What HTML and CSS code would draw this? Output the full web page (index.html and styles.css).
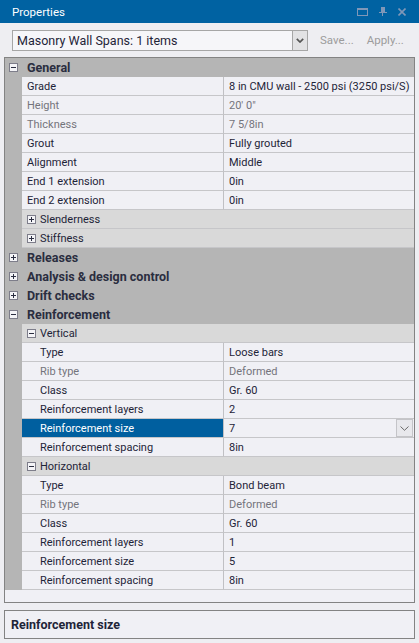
FILE: index.html
```html
<!DOCTYPE html>
<html>
<head>
<meta charset="utf-8">
<link rel="stylesheet" href="styles.css">
</head>
<body>
<div class="window">
  <div class="titlebar">
    <span class="title">Properties</span>
    <div class="title-icons">
      <svg width="11" height="8" viewBox="0 0 11 8"><rect x="0.5" y="0.5" width="10" height="7" fill="none" stroke="#7f97b8" stroke-width="1"/><rect x="0" y="0" width="11" height="2" fill="#7f97b8"/></svg>
      <svg width="8" height="9" viewBox="0 0 8 9"><rect x="2" y="0" width="4" height="5" fill="#7f97b8"/><rect x="0" y="5" width="8" height="1" fill="#7f97b8"/><rect x="3" y="6" width="1" height="3" fill="#7f97b8"/></svg>
      <svg width="8" height="8" viewBox="0 0 8 8"><path d="M0.5 0.5 L7.5 7.5 M7.5 0.5 L0.5 7.5" stroke="#7f97b8" stroke-width="1.6"/></svg>
    </div>
  </div>
  <div class="toolbar">
    <div class="combo">
      <span class="combo-text">Masonry Wall Spans: 1 items</span>
      <span class="combo-btn"><svg width="8" height="5" viewBox="0 0 8 5"><path d="M0.8 0.8 L4 4 L7.2 0.8" fill="none" stroke="#555" stroke-width="1.7"/></svg></span>
    </div>
    <span class="tool-link">Save...</span>
    <span class="tool-link">Apply...</span>
  </div>
  <div class="grid">
    <div class="cat"><span class="exp"><i class="minus"></i></span><span class="cat-name">General</span></div>
    <div class="prop"><span class="gut"></span><span class="name">Grade</span><span class="val">8 in CMU wall - 2500 psi (3250 psi/S)</span></div>
    <div class="prop dis"><span class="gut"></span><span class="name">Height</span><span class="val">20′ 0″</span></div>
    <div class="prop dis"><span class="gut"></span><span class="name">Thickness</span><span class="val">7 5/8in</span></div>
    <div class="prop"><span class="gut"></span><span class="name">Grout</span><span class="val">Fully grouted</span></div>
    <div class="prop"><span class="gut"></span><span class="name">Alignment</span><span class="val">Middle</span></div>
    <div class="prop"><span class="gut"></span><span class="name">End 1 extension</span><span class="val">0in</span></div>
    <div class="prop"><span class="gut"></span><span class="name">End 2 extension</span><span class="val">0in</span></div>
    <div class="sub"><span class="gut"></span><span class="sub-body"><span class="exp2"><i class="plus"></i></span>Slenderness</span></div>
    <div class="sub"><span class="gut"></span><span class="sub-body"><span class="exp2"><i class="plus"></i></span>Stiffness</span></div>
    <div class="cat"><span class="exp"><i class="plus"></i></span><span class="cat-name">Releases</span></div>
    <div class="cat"><span class="exp"><i class="plus"></i></span><span class="cat-name">Analysis &amp; design control</span></div>
    <div class="cat"><span class="exp"><i class="plus"></i></span><span class="cat-name">Drift checks</span></div>
    <div class="cat"><span class="exp"><i class="minus"></i></span><span class="cat-name">Reinforcement</span></div>
    <div class="sub"><span class="gut"></span><span class="sub-body"><span class="exp2"><i class="minus"></i></span>Vertical</span></div>
    <div class="prop nest"><span class="gut"></span><span class="name">Type</span><span class="val">Loose bars</span></div>
    <div class="prop nest dis"><span class="gut"></span><span class="name">Rib type</span><span class="val">Deformed</span></div>
    <div class="prop nest"><span class="gut"></span><span class="name">Class</span><span class="val">Gr. 60</span></div>
    <div class="prop nest"><span class="gut"></span><span class="name">Reinforcement layers</span><span class="val">2</span></div>
    <div class="prop nest sel"><span class="gut"></span><span class="name">Reinforcement size</span><span class="val"><span class="val-text">7</span><span class="cell-btn"><svg width="9" height="5" viewBox="0 0 9 5"><path d="M0.5 0.5 L4.5 4.3 L8.5 0.5" fill="none" stroke="#6a6a6a" stroke-width="1"/></svg></span></span></div>
    <div class="prop nest"><span class="gut"></span><span class="name">Reinforcement spacing</span><span class="val">8in</span></div>
    <div class="sub"><span class="gut"></span><span class="sub-body"><span class="exp2"><i class="minus"></i></span>Horizontal</span></div>
    <div class="prop nest"><span class="gut"></span><span class="name">Type</span><span class="val">Bond beam</span></div>
    <div class="prop nest dis"><span class="gut"></span><span class="name">Rib type</span><span class="val">Deformed</span></div>
    <div class="prop nest"><span class="gut"></span><span class="name">Class</span><span class="val">Gr. 60</span></div>
    <div class="prop nest"><span class="gut"></span><span class="name">Reinforcement layers</span><span class="val">1</span></div>
    <div class="prop nest"><span class="gut"></span><span class="name">Reinforcement size</span><span class="val">5</span></div>
    <div class="prop nest"><span class="gut"></span><span class="name">Reinforcement spacing</span><span class="val">8in</span></div>
  </div>
  <div class="desc"><span class="desc-title">Reinforcement size</span></div>
</div>
</body>
</html>
```
FILE: styles.css
```css
* { box-sizing: border-box; }
html, body { margin: 0; padding: 0; }
body {
  font-family: Roboto, "Noto Sans", sans-serif;
  font-size: 11px;
  color: #1e2438;
  background: #eeeef2;
}
.window {
  width: 419px;
  height: 643px;
  display: flex;
  flex-direction: column;
  background: #eeeef2;
  overflow: hidden;
}
.titlebar {
  height: 23px;
  flex: none;
  background: #0062a2;
  display: flex;
  align-items: center;
  justify-content: space-between;
  padding: 0 13px 0 12px;
}
.title { color: #ffffff; font-size: 11.5px; }
.title-icons { display: flex; align-items: center; gap: 11px; }
.title-icons svg { display: block; }
.toolbar {
  height: 34px;
  flex: none;
  display: flex;
  align-items: flex-start;
  padding: 7px 0 0 12px;
}
.combo {
  width: 296px;
  height: 21px;
  border: 1px solid #a6a6a6;
  background: #f6f6f9;
  display: flex;
  align-items: stretch;
}
.combo-text { flex: 1; padding-left: 4px; line-height: 19px; font-size: 12.5px; }
.combo-btn {
  width: 15px;
  border-left: 1px solid #a6a6a6;
  background: #e2e2e4;
  display: flex;
  align-items: center;
  justify-content: center;
}
.combo-btn svg { display: block; }
.tool-link { color: #9c9c9c; line-height: 21px; font-size: 11.5px; }
.toolbar .tool-link:first-of-type { margin-left: 12px; }
.toolbar .tool-link + .tool-link { margin-left: 13px; }
.grid {
  flex: none;
  height: 546px;
  margin: 0 4px;
  border: 1px solid #838383;
  background: #f0f0f5;
  display: flex;
  flex-direction: column;
}
.cat {
  height: 19px;
  flex: none;
  background: #b5b5b5;
  display: flex;
  align-items: center;
}
.exp { width: 17px; display: flex; align-items: center; padding-left: 4px; }
.cat-name { font-weight: bold; color: #2a2d40; padding-left: 5px; line-height: 19px; font-size: 12.5px; }
.exp i, .exp2 i {
  display: block;
  width: 9px;
  height: 9px;
  border: 1px solid #7d7d8a;
  background: #f4f4f7 ;
  position: relative;
}
.exp i::before, .exp2 i::before {
  content: "";
  position: absolute;
  left: 1px; top: 3px;
  width: 5px; height: 1px;
  background: #2a2d40;
}
.exp i.plus::after, .exp2 i.plus::after {
  content: "";
  position: absolute;
  left: 3px; top: 1px;
  width: 1px; height: 5px;
  background: #2a2d40;
}
.gut { width: 17px; flex: none; background: #b5b5b5; }
.prop { height: 19px; flex: none; display: flex; }
.name, .val {
  height: 19px;
  padding-top: 1px;
  line-height: 17px;
  border-bottom: 1px solid #c6c6c9;
  white-space: nowrap;
  overflow: hidden;
}
.name { width: 202px; flex: none; padding-left: 5px; border-right: 1px solid #c0c0c4; }
.val { flex: 1; padding-left: 5px; display: flex; }
.nest .name { padding-left: 18px; }
.dis .name, .dis .val { color: #74747c; }
.sel .name { background: #005f9f; color: #ffffff; }
.sel .val { padding-top: 0; }
.sel .val-text { padding-top: 1px; }
.val-text { flex: 1; }
.cell-btn {
  width: 17px;
  height: 18px;
  flex: none;
  border: 1px solid #c4c4c8;
  background: #e8e8ec;
  display: flex;
  align-items: center;
  justify-content: center;
  margin-right: 1px;
}
.cell-btn svg { display: block; }
.sub { height: 19px; flex: none; display: flex; }
.sub-body {
  flex: 1;
  background: #d9d9d9;
  border-bottom: 1px solid #c6c6c9;
  display: flex;
  align-items: center;
  padding-left: 5px;
  padding-top: 1px;
  line-height: 17px;
}
.exp2 { margin-right: 4px; }
.desc {
  flex: none;
  height: 29px;
  margin: 7px 4px 0 4px;
  border: 1px solid #838383;
  background: #f0f0f5;
  padding-left: 6px;
  display: flex;
  align-items: center;
}
.desc-title { font-weight: bold; color: #1e2438; font-size: 12.5px; }
```
